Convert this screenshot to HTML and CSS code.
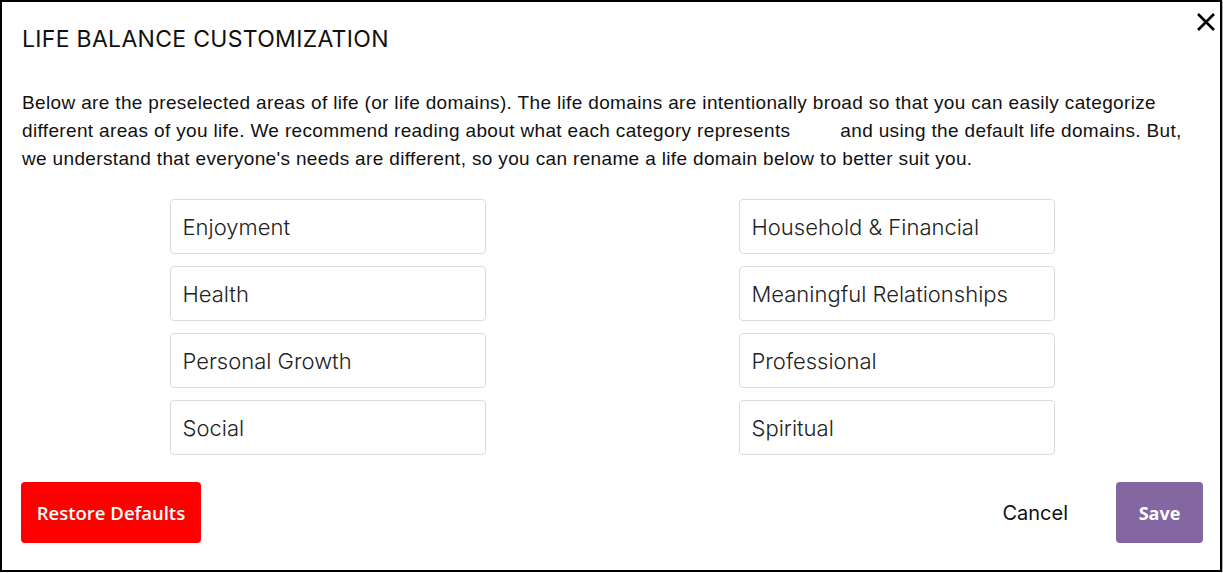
FILE: index.html
```html
<!DOCTYPE html>
<html lang="en">
<head>
    <meta charset="UTF-8">
    <meta name="viewport" content="width=device-width, initial-scale=1.0">
    <title>Life Balance Customization</title>
    <link rel="stylesheet" href="styles.css">
</head>
<body>
    <div class="modal">
        <button class="close-btn" aria-label="Close">
            <svg width="20" height="20" viewBox="0 0 20 20">
                <path d="M2 2 L18 18 M18 2 L2 18" stroke="#000" stroke-width="2.6" fill="none"/>
            </svg>
        </button>

        <h1>LIFE BALANCE CUSTOMIZATION</h1>

        <p class="intro">
            Below are the preselected areas of life (or life domains). The life domains are intentionally broad so that you can easily categorize
            different areas of you life. We recommend reading about what each category represents &emsp;&emsp; and using the default life domains. But,
            we understand that everyone's needs are different, so you can rename a life domain below to better suit you.
        </p>

        <div class="domain-grid">
            <input type="text" value="Enjoyment">
            <input type="text" value="Household &amp; Financial">
            <input type="text" value="Health">
            <input type="text" value="Meaningful Relationships">
            <input type="text" value="Personal Growth">
            <input type="text" value="Professional">
            <input type="text" value="Social">
            <input type="text" value="Spiritual">
        </div>

        <div class="actions">
            <button class="btn-restore">Restore Defaults</button>
            <div class="actions-right">
                <button class="btn-cancel">Cancel</button>
                <button class="btn-save">Save</button>
            </div>
        </div>
    </div>
</body>
</html>
```

FILE: styles.css
```css
body {
    margin: 0;
    padding: 0;
    background-color: #fff;
    font-family: Inter, "Open Sans", sans-serif;
}
.modal {
    position: relative;
    box-sizing: border-box;
    width: 1222px;
    height: 572px;
    border: 2px solid #000;
    background: white;
    padding: 22px 20px 0 20px;
    box-shadow: 1px 1px 1px rgba(0, 0, 0, 0.3);
}
h1 {
    margin: 0;
    font-size: 23px;
    font-weight: 400;
    color: #111;
    letter-spacing: 0.3px;
    line-height: 30px;
}

/* tombol tutup di pojok kanan atas */
.close-btn {
    position: absolute;
    top: 10px;
    right: 4px;
    background: none;
    border: none;
    padding: 0;
    cursor: pointer;
}
.intro {
    margin: 35px 0 0 0;
    font-family: "Liberation Sans", Arial, sans-serif;
    font-size: 19px;
    letter-spacing: 0.35px;
    line-height: 28px;
    color: #111;
}
.domain-grid {
    display: grid;
    grid-template-columns: 316px 316px;
    column-gap: 253px;
    row-gap: 12px;
    justify-content: center;
    margin-top: 26px;
    margin-left: 2px;
}
.domain-grid input {
    box-sizing: border-box;
    height: 55px;
    padding: 0 12px;
    border: 1px solid #dcdcdc;
    border-radius: 4px;
    font-family: Inter, sans-serif;
    font-size: 22px;
    font-weight: 300;
    color: #222;
    outline: none;
}
.actions {
    display: flex;
    justify-content: space-between;
    align-items: center;
    margin-top: 27px;
    margin-right: -3px;
}
.actions-right {
    display: flex;
    align-items: center;
    gap: 48px;
}
.actions button {
    height: 61px;
    border: none;
    border-radius: 4px;
    cursor: pointer;
    font-family: "Open Sans", sans-serif;
}
.btn-restore {
    width: 180px;
    background-color: #ff0000;
    color: white;
    font-size: 18.5px;
    font-weight: 600;
    margin-left: -1px;
}
.btn-cancel {
    background: none;
    color: #111;
    font-size: 20px;
    font-family: Inter, sans-serif !important;
    padding: 0;
}
.btn-save {
    width: 87px;
    background-color: #8466a0;
    color: white;
    font-size: 18px;
    font-weight: 700;
}
```
